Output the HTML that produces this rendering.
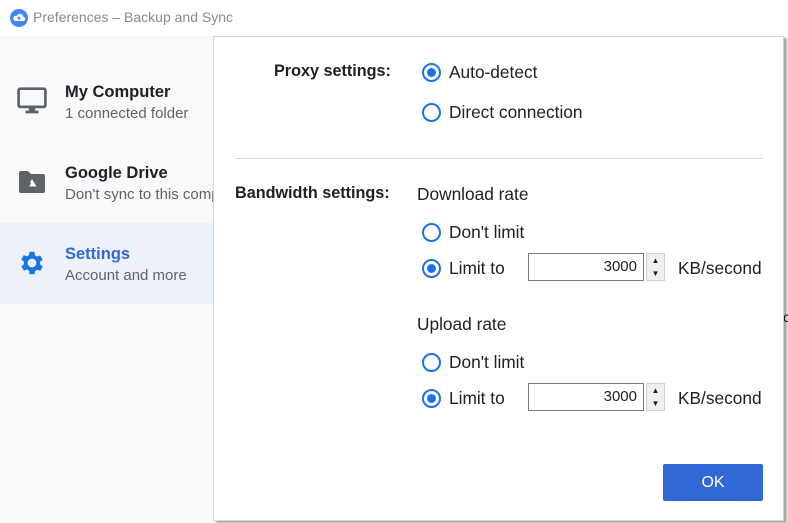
<!DOCTYPE html>
<html><head><meta charset="utf-8"><style>
*{margin:0;padding:0;box-sizing:border-box}
body{width:788px;height:523px;overflow:hidden;background:#fff;font-family:"Liberation Sans",Arial,sans-serif;position:relative;color:#202124}
.abs{position:absolute;white-space:nowrap}
#side{position:absolute;left:0;top:36px;width:216px;height:487px;background:#f8f9fb}
.t{font-size:16.5px;font-weight:bold;color:#202124}
.s{font-size:15px;color:#5f6368}
#dlg{position:absolute;left:213px;top:36px;width:571px;height:485px;background:#fff;border:1px solid #d6d6d6;box-shadow:3px 2px 2px rgba(0,0,0,.35)}
.l{font-size:17.3px;color:#202124}
.b{font-size:16.2px;font-weight:bold;color:#202124}
.r{position:absolute;width:19px;height:19px;border:2px solid #1a73e8;border-radius:50%}
.r.on::after{content:"";position:absolute;left:3px;top:3px;width:9px;height:9px;border-radius:50%;background:#1a73e8}
.inp{position:absolute;width:116px;height:28px;border:1px solid #7a7a7a;font-size:15px;text-align:right;padding:4px 6px 0 0;color:#202124}
.sp{position:absolute;width:19px;height:28px;background:#f0f0f0;border:1px solid #d0d0d0}
.sp div{height:13px;font-size:8px;line-height:13px;text-align:center;color:#222}
</style></head><body>
<svg class="abs" style="left:10px;top:9px" width="18" height="18" viewBox="0 0 18 18"><circle cx="9" cy="9" r="9" fill="#4285f4"/><path d="M5 12h8a2.2 2.2 0 0 0 0-4.4A3.2 3.2 0 0 0 6.8 7 2.5 2.5 0 0 0 5 12z" fill="#fff"/><path d="M9 8v3M7.5 9.5 9 8l1.5 1.5" stroke="#4285f4" stroke-width="1.2" fill="none"/></svg>
<div class="abs" style="left:33px;top:9px;font-size:14px;color:#8a8a8a">Preferences – Backup and Sync</div>
<div id="side">
 <div style="position:absolute;left:0;top:187px;width:216px;height:81px;background:#edf1f9"></div>
</div>
<svg class="abs" style="left:17px;top:87px" width="30" height="28" viewBox="0 0 28 26"><rect x="1.5" y="1.5" width="25" height="17" rx="1.5" fill="none" stroke="#5f6368" stroke-width="2.5"/><rect x="11" y="19" width="6" height="4" fill="#5f6368"/><rect x="8" y="22" width="12" height="2.5" fill="#5f6368"/></svg>
<div class="abs t" style="left:65px;top:83px">My Computer</div>
<div class="abs s" style="left:65px;top:105px">1 connected folder</div>
<svg class="abs" style="left:19px;top:171px" width="26" height="22" viewBox="0 0 26 22"><path d="M0 2a2 2 0 0 1 2-2h7l3 3h12a2 2 0 0 1 2 2v15a2 2 0 0 1-2 2H2a2 2 0 0 1-2-2z" fill="#5f6368"/><path d="M13 8l4.5 7.5h-9z" fill="#fff"/><path d="M11 11l-3 5h2l2-3.5z" fill="#5f6368"/></svg>
<div class="abs t" style="left:65px;top:164px">Google Drive</div>
<div class="abs s" style="left:65px;top:186px;width:149px;overflow:hidden">Don't sync to this computer</div>
<svg class="abs" style="left:17px;top:248px" width="30" height="30" viewBox="0 0 24 24"><path fill="#1a73e8" d="M19.4 13a7.5 7.5 0 0 0 0-2l2.1-1.6-2-3.5-2.5 1a7.4 7.4 0 0 0-1.7-1L15 3h-4l-.4 2.7a7.4 7.4 0 0 0-1.7 1l-2.5-1-2 3.5L6.6 11a7.5 7.5 0 0 0 0 2l-2.1 1.6 2 3.5 2.5-1a7.4 7.4 0 0 0 1.7 1L11 21h4l.4-2.7a7.4 7.4 0 0 0 1.7-1l2.5 1 2-3.5zM13 15.5a3.5 3.5 0 1 1 0-7 3.5 3.5 0 0 1 0 7z" transform="translate(-1 0)"/></svg>
<div class="abs t" style="left:65px;top:245px;color:#3367d6">Settings</div>
<div class="abs s" style="left:65px;top:267px">Account and more</div>
<div class="abs" style="left:783px;top:309px;font-size:14px">c</div>

<div id="dlg"></div>
<div class="abs b" style="left:274px;top:62px">Proxy settings:</div>
<div class="r on" style="left:422px;top:63px"></div><div class="abs l" style="left:449px;top:62px">Auto-detect</div>
<div class="r" style="left:422px;top:103px"></div><div class="abs l" style="left:449px;top:102px">Direct connection</div>
<div class="abs" style="left:235px;top:158px;width:528px;height:1px;background:#dadce0"></div>
<div class="abs b" style="left:235px;top:184px">Bandwidth settings:</div>
<div class="abs l" style="left:417px;top:184px">Download rate</div>
<div class="r" style="left:422px;top:223px"></div><div class="abs l" style="left:449px;top:222px">Don't limit</div>
<div class="r on" style="left:422px;top:259px"></div><div class="abs l" style="left:449px;top:258px">Limit to</div>
<div class="inp" style="left:528px;top:253px">3000</div>
<div class="sp" style="left:646px;top:253px"><div>▲</div><div>▼</div></div>
<div class="abs l" style="left:678px;top:258px">KB/second</div>
<div class="abs l" style="left:417px;top:314px">Upload rate</div>
<div class="r" style="left:422px;top:353px"></div><div class="abs l" style="left:449px;top:352px">Don't limit</div>
<div class="r on" style="left:422px;top:389px"></div><div class="abs l" style="left:449px;top:388px">Limit to</div>
<div class="inp" style="left:528px;top:383px">3000</div>
<div class="sp" style="left:646px;top:383px"><div>▲</div><div>▼</div></div>
<div class="abs l" style="left:678px;top:388px">KB/second</div>
<div class="abs" style="left:663px;top:464px;width:100px;height:37px;background:#3367d6;border-radius:2px;color:#fff;font-size:16px;text-align:center;line-height:37px">OK</div>
</body></html>
